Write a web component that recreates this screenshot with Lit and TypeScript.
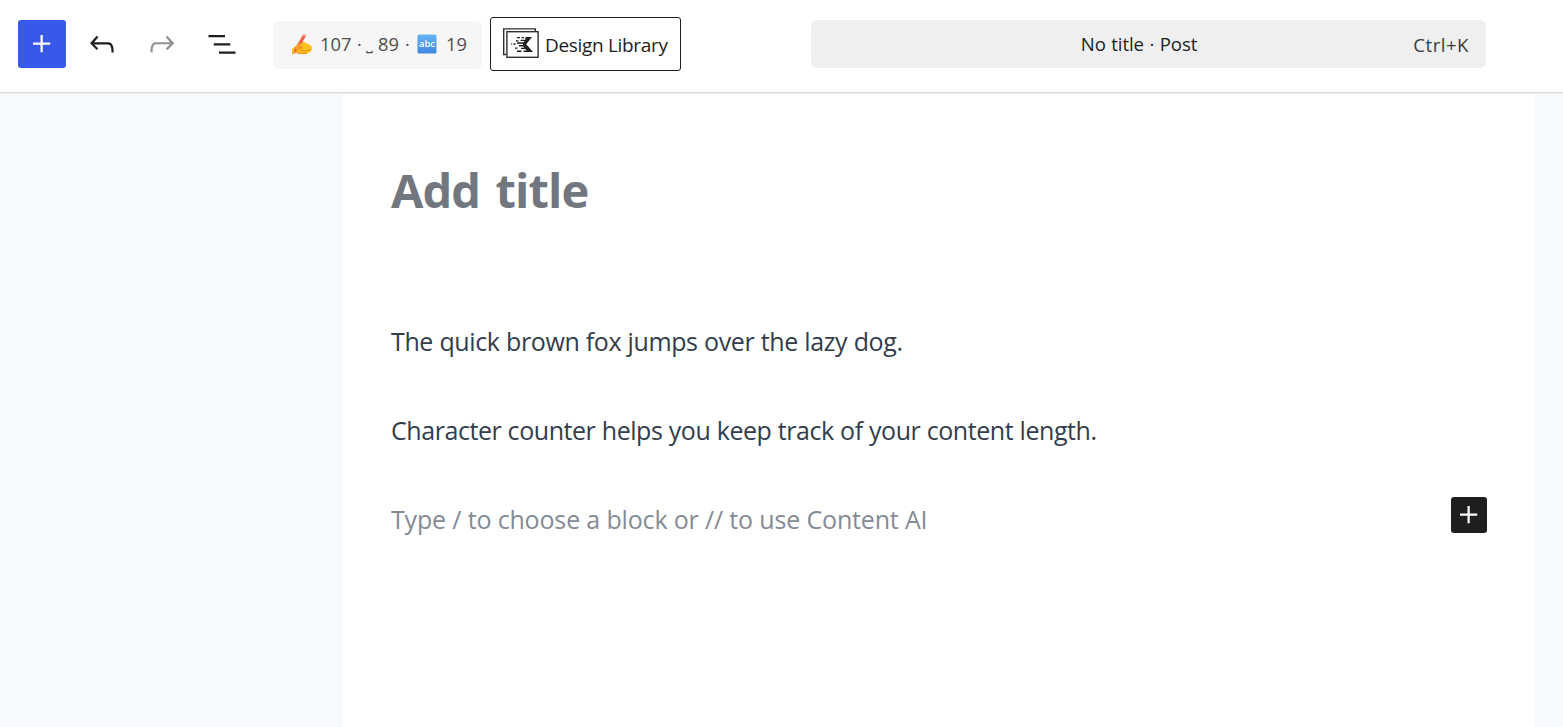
/**
 * Post editor shell: top toolbar and writing canvas.
 */

import { LitElement, html, css, svg } from "lit";
import { customElement, property } from "lit/decorators.js";

const ICONS = {
  plus: "M11 12.5V17.5H12.5V12.5H17.5V11H12.5V6H11V11H6V12.5H11Z",
  undo: "M18.3 11.7c-.6-.6-1.4-.9-2.3-.9H6.7l2.9-3.3-1.1-1-4.5 5L8.5 16l1-1-2.7-2.7H16c.5 0 .9.2 1.3.5 1 1 1 3.4 1 4.5v.3h1.5v-.2c0-1.5 0-4.3-1.5-5.7z",
  redo: "M15.6 6.5l-1.1 1 2.9 3.3H8c-.9 0-1.7.3-2.3.9-1.4 1.5-1.4 4.2-1.4 5.6v.2h1.5v-.3c0-1.1 0-3.5 1-4.5.3-.3.7-.5 1.3-.5h9.2L14.5 15l1.1 1.1 4.6-4.6-4.6-5z",
  list: "M3 6h11v1.5H3V6Zm3.5 5.5h11V13h-11v-1.5ZM21 17H10v1.5h11V17Z",
};

@customElement("editor-icon")
export class EditorIcon extends LitElement {
  /** Key into ICONS. */
  @property({ type: String })
  name: keyof typeof ICONS = "plus";

  static styles = css`
    :host {
      display: block;
      width: 36px;
      height: 36px;
    }

    svg {
      display: block;
      fill: currentColor;
    }
  `;

  render() {
    return html`
      <svg width="36" height="36" viewBox="0 0 24 24">
        ${svg`<path d=${ICONS[this.name]}></path>`}
      </svg>
    `;
  }
}

@customElement("character-counter")
export class CharacterCounter extends LitElement {
  @property({ type: Number })
  characters = 0;

  /** Characters without spaces. */
  @property({ type: Number })
  letters = 0;

  @property({ type: Number })
  words = 0;

  static styles = css`
    :host {
      box-sizing: border-box;
      display: flex;
      align-items: center;
      width: 209px;
      height: 48px;
      padding: 0 0 2px 18px;
      border-radius: 6px;
      background: #f6f6f6;
      color: #4d4d4d;
      font-size: 18.3px;
      line-height: 26px;
      white-space: pre;
    }

    svg {
      display: block;
      flex: none;
    }

    .characters {
      width: 32px;
      margin-left: 7px;
    }

    .dot {
      width: 6px;
      margin-left: 5px;
    }

    .space {
      width: 8px;
      margin: 0 4px 0 3px;
      font: 17px "DejaVu Sans", sans-serif;
    }

    .letters {
      width: 22px;
    }

    .abc {
      margin-left: 6px;
    }

    .abc text {
      font: 600 9.5px "Open Sans", sans-serif;
      fill: #fff;
    }

    .words {
      margin-left: 9px;
    }
  `;

  render() {
    return html`
      <svg width="22" height="22" viewBox="0 0 22 22">
        <path d="M1 20.5V16l3-2.6 6-4.2c1.200-.8 2.500-.6 3.500 0l5.500 2.700c1.500.8 2.400 2.200 2 3.800-.5 3-3 4.800-6.500 4.800H8l-3.200-1z" fill="#fcc21b"></path>
        <path d="M4 14.500 9.500 8c1-.9 2.400.2 1.800 1.400L8 14l2.500-.6c1.500-.3 2 1.500.6 2l-5 1.800z" fill="#f79329"></path>
        <path d="M9 17.500c3 .7 7 .5 11-.8M1 20.500l4.800-1 2.500 1H16" fill="none" stroke="#ef8b22" stroke-width="1"></path>
        <path d="M3.300 17 11.600 2.200l3 1.500L6.200 17.700 3 19.500z" fill="#f2603f"></path>
        <path d="M11.600 2.200 12.500.8l3 1.500-.9 1.400z" fill="#f79a91"></path>
        <path d="M4.500 13.500 9 10.600c1.300-.6 2 .8 1 1.600L7 14.500l1.500.4-3 2.800z" fill="#fba92d"></path>
      </svg>
      <span class="characters">${this.characters}</span>
      <span class="dot">·</span>
      <span class="space">˽</span>
      <span class="letters">${this.letters}</span>
      <span class="dot">·</span>
      <svg class="abc" width="20" height="20" viewBox="0 0 20 20">
        <defs>
          <linearGradient id="tile" x2="0" y2="1">
            <stop stop-color="#64b5f6"></stop>
            <stop offset="1" stop-color="#3f87df"></stop>
          </linearGradient>
        </defs>
        <rect x=".5" y=".5" width="19" height="19" rx="1.500" fill="url(#tile)"></rect>
        <text x="2" y="13" textLength="16" lengthAdjust="spacingAndGlyphs">abc</text>
      </svg>
      <span class="words">${this.words}</span>
    `;
  }
}

@customElement("app-root")
export class AppRoot extends LitElement {
  static styles = css`
    :host {
      display: flex;
      flex-direction: column;
      height: 100vh;
      overflow: hidden;
      background: #fff;
      color: #1e1e1e;
      font-family: "Open Sans", "Noto Sans", sans-serif;
    }

    .header {
      box-sizing: border-box;
      flex: none;
      display: flex;
      align-items: flex-start;
      height: 93px;
      padding: 17px 77px 0 18px;
      border-bottom: 1px solid #d9dadc;
    }

    .tools {
      display: flex;
      gap: 12px;
      margin-top: 3px;
    }

    .tool {
      display: grid;
      place-items: center;
      width: 48px;
      height: 48px;
      border-radius: 3px;
    }

    .primary {
      background: #3858e9;
      color: #fff;
    }

    .disabled {
      color: #949494;
    }

    character-counter {
      margin: 4px 8px 0 27px;
    }

    .library {
      box-sizing: border-box;
      display: flex;
      align-items: center;
      gap: 6px;
      width: 191px;
      height: 54px;
      padding-left: 11px;
      border: 1.5px solid #1e1e1e;
      border-radius: 3px;
      font-size: 19px;
      letter-spacing: -0.32px;
      white-space: nowrap;
    }

    .library svg {
      display: block;
      flex: none;
      margin-top: -2px;
    }

    .library span {
      margin-top: 2px;
    }

    .command {
      flex: 1;
      display: grid;
      grid-template-columns: 1fr auto 1fr;
      align-items: center;
      height: 48px;
      margin: 3px 0 0 130px;
      padding: 0 17px;
      border-radius: 6px;
      background: #efefef;
      box-sizing: border-box;
      font-size: 18.6px;
    }

    .document {
      grid-column: 2;
      margin: -2px 0 0 -19px;
      letter-spacing: -0.1px;
      word-spacing: 0.8px;
    }

    .shortcut {
      justify-self: end;
      margin-top: 1px;
      color: #3c3c3c;
      letter-spacing: 0.5px;
    }

    .canvas {
      flex: 1;
      padding: 0 28px 0 343px;
      border-top: 1px solid #ebedef;
      background: #f6fafd;
    }

    .page {
      box-sizing: border-box;
      height: 100%;
      padding: 64px 48.500px 0 48px;
      background: #fff;
    }

    h1 {
      margin: 0;
      color: #72777f;
      font-size: 47px;
      font-weight: 700;
      line-height: 64px;
      letter-spacing: -0.9px;
      word-spacing: 4px;
    }

    .body {
      display: grid;
      gap: 49px;
      margin-top: 99px;
      color: #333d4b;
      font-size: 25px;
      line-height: 40px;
      white-space: nowrap;
    }

    p {
      margin: 0;
    }

    .first {
      letter-spacing: -0.38px;
      word-spacing: 0.3px;
    }

    .second {
      letter-spacing: -0.44px;
      word-spacing: 0.3px;
    }

    .prompt {
      display: flex;
      justify-content: space-between;
      color: #858b94;
      letter-spacing: -0.16px;
    }

    .inserter {
      display: grid;
      place-items: center;
      width: 36px;
      height: 36px;
      margin-top: -2px;
      border-radius: 3px;
      background: #1e1e1e;
      color: #fff;
    }
  `;

  render() {
    return html`
      <div class="header">
        <div class="tools">
          <div class="tool primary"><editor-icon name="plus"></editor-icon></div>
          <div class="tool"><editor-icon name="undo"></editor-icon></div>
          <div class="tool disabled"><editor-icon name="redo"></editor-icon></div>
          <div class="tool"><editor-icon name="list"></editor-icon></div>
        </div>
        <character-counter characters="107" letters="89" words="19"></character-counter>
        <div class="library">
          <svg width="37" height="31" viewBox="0 0 37 31">
            <g fill="none" stroke="#303030" stroke-width="1.400">
              <path d="M4 26.500H1.700V.9h31.600v2.600"></path>
              <rect x="4.900" y="3.700" width="31.200" height="25.600"></rect>
            </g>
            <path
              d="M19.500 9h2.500v1.300h-2.500zM23.500 9H30l-5.800 7.300L31 24h-9.500v-1.400h3.200l-1.300-1.500H19v-1.400h3.200l-1-1.300H17v-1.400h4v-1.300h-6v-1.400h6.500l1-1.300H18.500v-1.300h4.800zM15 9h3v1.300h-3zM14 12.200h2.500v1.300H14zM11.500 15.200h2v1.500h-2zM9 15.400h1.200v1.200H9zM13 19.500h2.500v1.300H13zM15 22.600h4.500V24H15z"
              fill="#1e1e1e"
            ></path>
          </svg>
          <span>Design Library</span>
        </div>
        <div class="command">
          <span class="document">No title · Post</span>
          <span class="shortcut">Ctrl+K</span>
        </div>
      </div>
      <div class="canvas">
        <div class="page">
          <h1>Add title</h1>
          <div class="body">
            <p class="first">The quick brown fox jumps over the lazy dog.</p>
            <p class="second">Character counter helps you keep track of your content length.</p>
            <div class="prompt">
              <p>Type / to choose a block or // to use Content AI</p>
              <div class="inserter"><editor-icon name="plus"></editor-icon></div>
            </div>
          </div>
        </div>
      </div>
    `;
  }
}
